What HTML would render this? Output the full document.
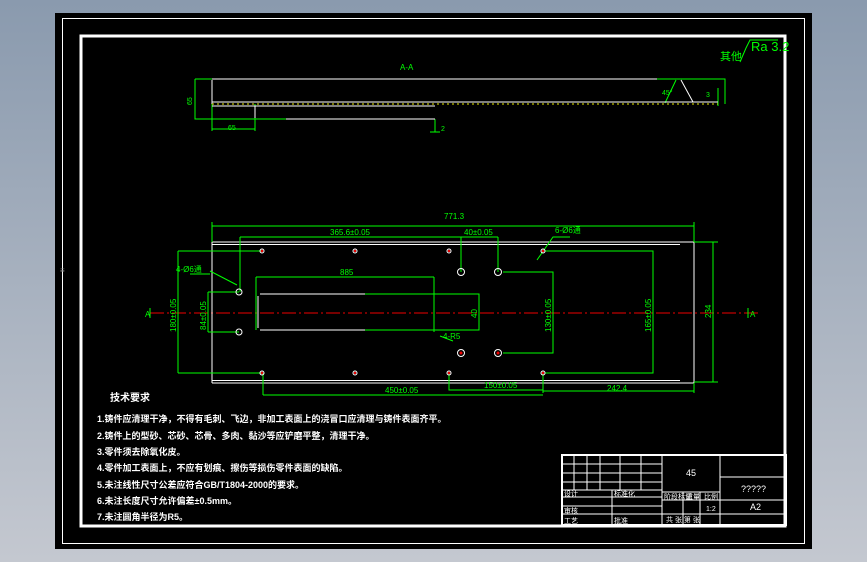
<!DOCTYPE html>
<html><head><meta charset="utf-8"><style>
html,body{margin:0;padding:0;width:867px;height:562px;overflow:hidden;background:linear-gradient(#8a9aae,#c4c8d0);}
svg{position:absolute;left:0;top:0;}
text{font-family:"Liberation Sans","Noto Sans CJK SC",sans-serif;}
</style></head><body>
<svg width="867" height="562" viewBox="0 0 867 562">
<rect x="55" y="13" width="757" height="536" fill="#000"/>
<rect x="62.5" y="18.5" width="742" height="525" fill="none" stroke="#fff" stroke-width="1"/>
<rect x="81" y="36" width="704" height="490" fill="none" stroke="#fff" stroke-width="3"/>
<text x="60" y="273" fill="#888" font-size="8">≡</text>

<!-- Section A-A -->
<g stroke="#0f0" stroke-width="1" fill="none">
<path d="M195 79H212M657 79H725V104M195 79V119H286M435 119V132M212 104V131M255 104V131M212 129H255M430 132H440M718 88V106M676 80L665 103"/>
</g>
<g stroke="#fff" stroke-width="1" fill="none">
<path d="M212 79H657M212 102H718M212 106H435M286 119H435M212 80V104M255 106V118M681 80L693 102"/>
</g>
<path d="M212 104H718" stroke="#ee0" stroke-width="1" stroke-dasharray="2 3"/>
<text x="400" y="70" fill="#0f0" font-size="8">A-A</text>
<text x="185" y="102" fill="#0f0" font-size="7" transform="rotate(-90 190 100)">65</text>
<text x="228" y="130" fill="#0f0" font-size="7">65</text>
<text x="441" y="131" fill="#0f0" font-size="7">2</text>
<text x="662" y="95" fill="#0f0" font-size="7">45°</text>
<text x="706" y="97" fill="#0f0" font-size="7">3</text>
<text x="720" y="60" fill="#0f0" font-size="11">其他</text>
<path d="M740 62L746 48L750 40H778" stroke="#0f0" fill="none"/>
<text x="751" y="51" fill="#0f0" font-size="13">Ra 3.2</text>

<!-- Plan view -->
<path d="M150 313H760" stroke="#e00" stroke-width="1" stroke-dasharray="14 3 2 3"/>
<g stroke="#fff" stroke-width="1" fill="none">
<path d="M212 242H694M212 244.5H680M212 380.5H680M212 383H694M212 242V383M694 242V383"/>
<path d="M260 294H365M260 330H365M258 296V328"/>
</g>
<g stroke="#0f0" stroke-width="1" fill="none">
<path d="M212 226H694M212 222V242M694 222V242"/>
<path d="M240 237H498M240 237V292M461 237V272M498 237V272"/>
<path d="M178 251H262M178 251V373M178 373H262M208 292H239M208 332H239M208 292V332"/>
<path d="M365 294H479V330H365M256 277H434M256 277V330M434 277V332M440 336L453 341"/>
<path d="M503 272H553V353H503M545 251H653V373H545M694 242H718M694 382H718M713 242V382"/>
<path d="M263 373V395M263 395H543M449 373V390H543M543 373V393M543 391H694M694 383V393"/>
<path d="M237 285L210 271M190 274H210M537 260L553 237H570M748 308V318M150 308V318"/>
</g>
<g fill="none" stroke="#fff" stroke-width="1">
<circle cx="262" cy="251" r="2"/><circle cx="355" cy="251" r="2"/><circle cx="449" cy="251" r="2"/><circle cx="543" cy="251" r="2"/>
<circle cx="262" cy="373" r="2"/><circle cx="355" cy="373" r="2"/><circle cx="449" cy="373" r="2"/><circle cx="543" cy="373" r="2"/>
<circle cx="461" cy="272" r="3.5"/><circle cx="498" cy="272" r="3.5"/><circle cx="461" cy="353" r="3.5"/><circle cx="498" cy="353" r="3.5"/>
<circle cx="239" cy="292" r="3"/><circle cx="239" cy="332" r="3"/>
</g>
<g fill="#e00"><circle cx="262" cy="251" r="1.2"/><circle cx="355" cy="251" r="1.2"/><circle cx="449" cy="251" r="1.2"/><circle cx="543" cy="251" r="1.2"/><circle cx="262" cy="373" r="1.2"/><circle cx="355" cy="373" r="1.2"/><circle cx="449" cy="373" r="1.2"/><circle cx="543" cy="373" r="1.2"/><circle cx="461" cy="353" r="1.5"/><circle cx="498" cy="353" r="1.5"/></g>
<g fill="#0f0" font-size="8">
<text x="444" y="219">771.3</text>
<text x="330" y="235">365.6±0.05</text>
<text x="464" y="235">40±0.05</text>
<text x="555" y="233">6-Ø6通</text>
<text x="176" y="272">4-Ø6通</text>
<text x="340" y="275">885</text>
<text x="443" y="339">4-R5</text>
<text x="385" y="393">450±0.05</text>
<text x="484" y="388">150±0.05</text>
<text x="607" y="391">242.4</text>
<text x="145" y="317">A</text><text x="750" y="317">A</text>
<text transform="translate(176 332) rotate(-90)">180±0.05</text>
<text transform="translate(206 330) rotate(-90)">84±0.05</text>
<text transform="translate(551 332) rotate(-90)">130±0.05</text>
<text transform="translate(651 332) rotate(-90)">165±0.05</text>
<text transform="translate(711 318) rotate(-90)">234</text>
<text transform="translate(477 318) rotate(-90)">40</text>
</g>

<!-- tech requirements -->
<g fill="#fff" font-size="9" font-weight="bold">
<text x="110" y="401" font-size="10">技术要求</text>
<text x="97" y="422">1.铸件应清理干净，不得有毛刺、飞边，非加工表面上的浇冒口应清理与铸件表面齐平。</text>
<text x="97" y="439">2.铸件上的型砂、芯砂、芯骨、多肉、黏沙等应铲磨平整，清理干净。</text>
<text x="97" y="455">3.零件须去除氧化皮。</text>
<text x="97" y="471">4.零件加工表面上，不应有划痕、擦伤等损伤零件表面的缺陷。</text>
<text x="97" y="488">5.未注线性尺寸公差应符合GB/T1804-2000的要求。</text>
<text x="97" y="504">6.未注长度尺寸允许偏差±0.5mm。</text>
<text x="97" y="520">7.未注圆角半径为R5。</text>
</g>

<!-- title block -->
<g stroke="#fff" stroke-width="1" fill="none">
<rect x="562" y="455" width="224" height="70" stroke-width="2"/>
<path d="M662 455V525M720 455V525M720 477H786M720 500H786M720 514H786M662 492H720M662 500H720M662 514H720"/>
<path d="M562 464H662M562 473H662M562 482H662M562 490H662M562 497H662M562 506H662M562 514H662M574 455V490M587 455V490M600 455V490M620 455V490M641 455V490M612 490V525M683 492V525M700 492V525M700 500V525"/>
</g>
<g fill="#fff" font-size="7">
<text x="686" y="476" font-size="9">45</text>
<text x="741" y="492" font-size="9">?????</text>
<text x="750" y="510" font-size="9">A2</text>
<text x="564" y="496">设计</text><text x="614" y="496">标准化</text>
<text x="564" y="513">审核</text><text x="564" y="523">工艺</text><text x="614" y="523">批准</text>
<text x="664" y="499">阶段标记</text><text x="686" y="499">重量</text><text x="704" y="499">比例</text>
<text x="706" y="511">1:2</text>
<text x="666" y="522">共 张 第 张</text>
</g>
</svg>
</body></html>
